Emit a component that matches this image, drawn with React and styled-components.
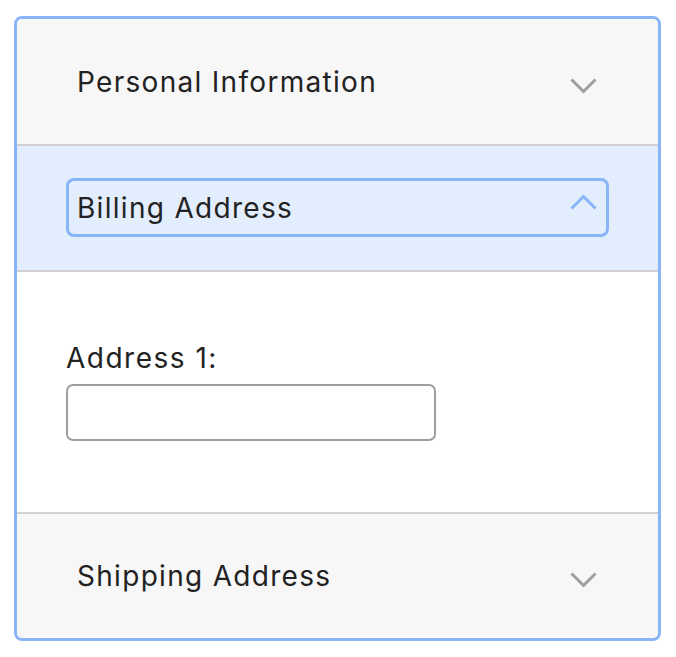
import React from "react";
import styled, { createGlobalStyle } from "styled-components";

const GlobalStyle = createGlobalStyle`
  html, body { margin: 0; padding: 0; background: #ffffff; }
  body { font-family: Inter, "Liberation Sans", Arial, sans-serif; color: #222222; }
  * { box-sizing: border-box; }
`;

const Page = styled.div`
  padding: 16px 0 0 14px;
`;

const Accordion = styled.div`
  width: 647px;
  border: 3px solid #8ab4f8;
  border-radius: 8px;
  overflow: hidden;
  background: #f7f7f7;
`;

const Section = styled.section`
  & + & { border-top: 2px solid #d1d1d1; }
`;

const Trigger = styled.button`
  position: relative;
  display: block;
  width: 100%;
  margin: 0;
  border: 0;
  padding: ${(p) => (p.$first ? "33px" : "32px")} 49px 33px 49px;
  background: ${(p) => (p.$expanded ? "#e2edfd" : "#f7f7f7")};
  font: inherit;
  color: #222222;
  text-align: left;
  cursor: pointer;
  outline: none;
`;

const Title = styled.span`
  display: block;
  border: 3px solid ${(p) => (p.$focused ? "#8ab4f8" : "transparent")};
  border-radius: 8px;
  padding: 11px 8px 9px 8px;
  font-size: 28px;
  line-height: 33px;
  letter-spacing: 1.3px;
  color: #222222;
`;

const Chevron = styled.svg`
  position: absolute;
  right: 61px;
  top: 50%;
  transform: translateY(calc(-50% + ${(p) => p.$shift}px));
  pointer-events: none;
`;

const Panel = styled.div`
  background: #ffffff;
  border-top: 2px solid #d1d1d1;
  padding: 69px 49px 71px 49px;
`;

const Label = styled.label`
  display: block;
  font-size: 28px;
  line-height: 34px;
  letter-spacing: 1.5px;
  color: #222222;
  margin-bottom: 9px;
`;

const Input = styled.input`
  display: block;
  width: 370px;
  height: 57px;
  border: 2px solid #9e9e9e;
  border-radius: 7px;
  padding: 0 14px;
  font: inherit;
  font-size: 28px;
  background: #ffffff;
  outline: none;
`;

function ChevronIcon({ up, color, shift }) {
  return (
    <Chevron width="27" height="17" viewBox="0 0 27 17" $shift={shift} aria-hidden="true">
      <polyline
        points={up ? "1.5,15 13.5,3 25.5,15" : "1.5,2 13.5,14 25.5,2"}
        fill="none"
        stroke={color}
        strokeWidth="3"
        strokeLinejoin="miter"
      />
    </Chevron>
  );
}

const sections = [
  { id: "personal", title: "Personal Information", expanded: false },
  { id: "billing", title: "Billing Address", expanded: true },
  { id: "shipping", title: "Shipping Address", expanded: false },
];

export default function App() {
  return (
    <Page>
      <GlobalStyle />
      <Accordion>
        {sections.map((s, i) => (
          <Section key={s.id}>
            <Trigger $expanded={s.expanded} $first={i === 0} aria-expanded={s.expanded}>
              <Title $focused={s.expanded}>{s.title}</Title>
              <ChevronIcon
                up={s.expanded}
                color={s.expanded ? "#8ab4f8" : "#9e9e9e"}
                shift={s.expanded ? -6 : 4}
              />
            </Trigger>
            {s.expanded && (
              <Panel>
                <Label htmlFor="addr1">Address 1:</Label>
                <Input id="addr1" type="text" />
              </Panel>
            )}
          </Section>
        ))}
      </Accordion>
    </Page>
  );
}
